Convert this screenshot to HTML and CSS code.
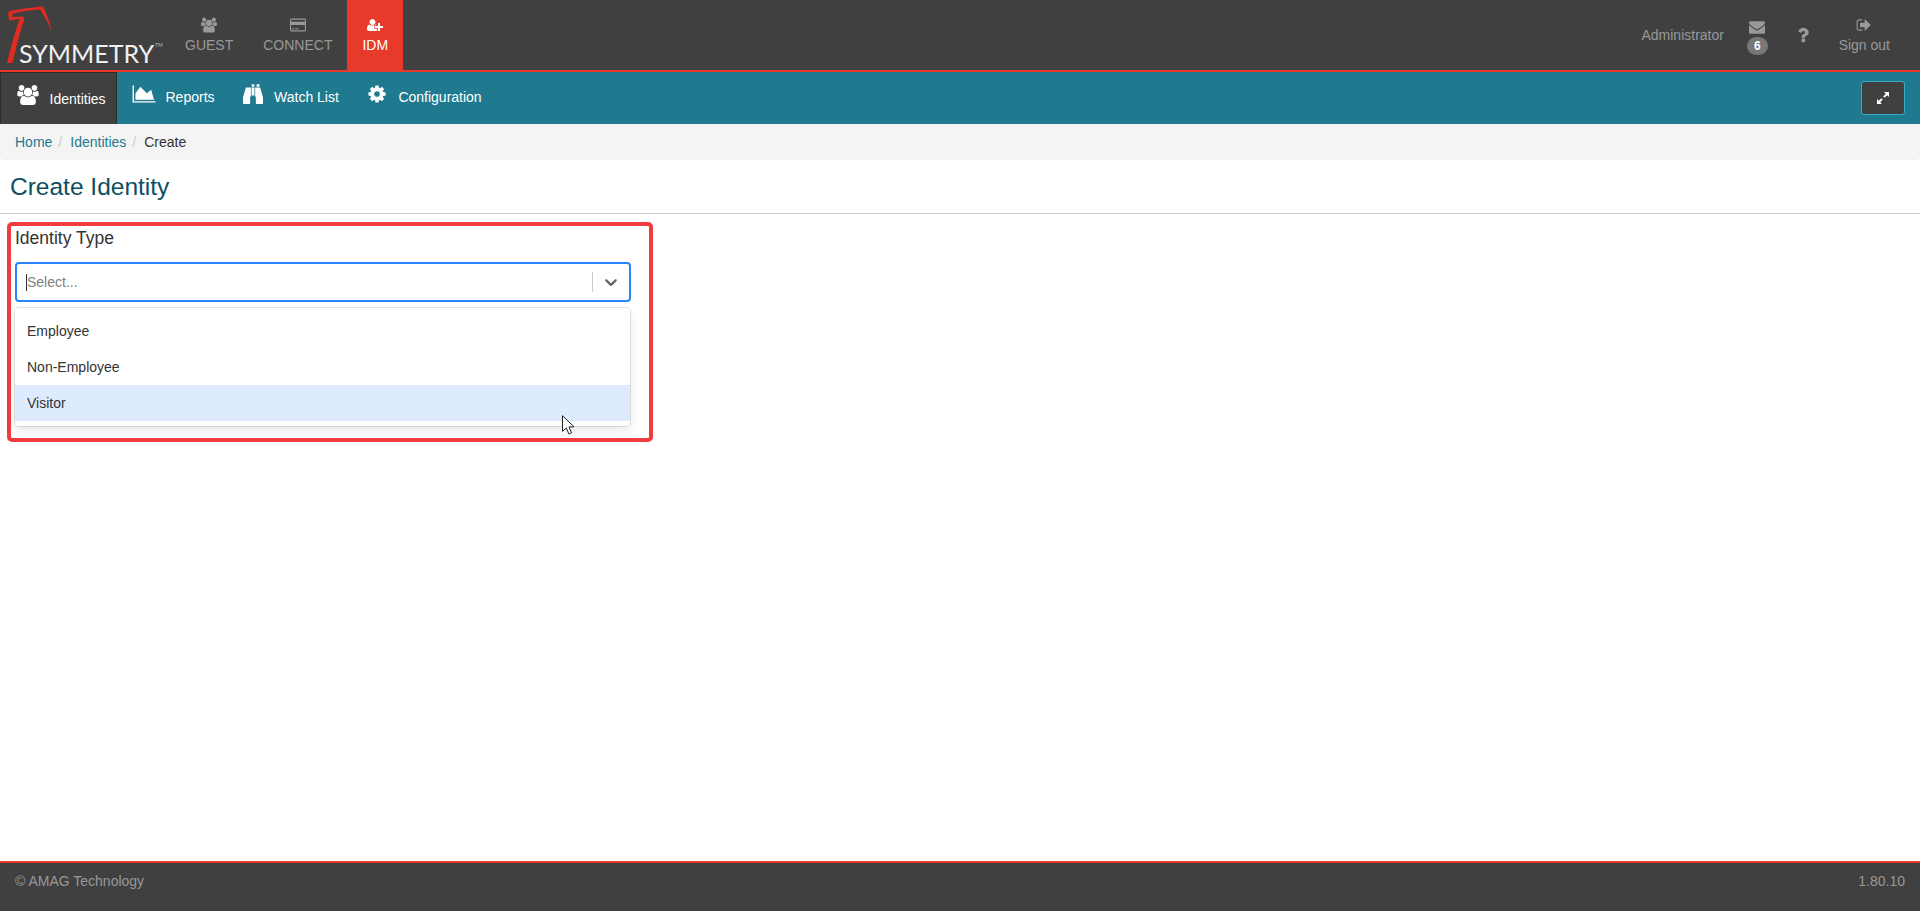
FILE: index.html
```html
<!DOCTYPE html>
<html lang="en">
<head>
    <meta charset="UTF-8">
    <meta name="viewport" content="width=device-width, initial-scale=1.0">
    <title>Create Identity</title>
    <link rel="stylesheet" href="styles.css">
</head>
<body>

<header class="top-bar">
    <a class="logo">
        <svg class="logo-bird" viewBox="0 0 60 70"><path fill="#e02b20" d="M8 14Q8 11 12 10.500Q28 7.500 43 6.500Q49 18 51.500 31Q46 18 40 9.500Q27 10 13 13.500L12 17L23.500 16.500L24 18L19 19L9.500 20.500Z"/><path fill="#e02b20" d="M19.500 18.500L24.500 18Q17 42 12.500 63L7 63Q12 42 19.500 18.500Z"/></svg>
        <span class="logo-text">SYMMETRY<sup>TM</sup></span>
    </a>
    <a class="app-tab">
        <svg class="tab-icon" viewBox="0 0 1920 1792"><path d="M593 896q-162 5-265 128h-134q-82 0-138-40.500t-56-118.500q0-353 124-353 6 0 43.500 21t97.500 42.500 119 21.500q67 0 133-23-5 37-5 66 0 139 81 256zm1071 637q0 120-73 189.500t-194 69.500h-874q-121 0-194-69.500t-73-189.500q0-53 3.500-103.500t14-109 26.500-108.500 43-97.500 62-81 85.500-53.500 111.500-20q10 0 43 21.500t73 48 107 48 135 21.500 135-21.500 107-48 73-48 43-21.500q61 0 111.500 20t85.500 53.500 62 81 43 97.500 26.500 108.500 14 109 3.500 103.500zm-1024-1277q0 106-75 181t-181 75-181-75-75-181 75-181 181-75 181 75 75 181zm704 384q0 159-112.500 271.500t-271.500 112.500-271.500-112.500-112.500-271.500 112.500-271.500 271.500-112.500 271.500 112.500 112.500 271.500zm576 225q0 78-56 118.500t-138 40.500h-134q-103-123-265-128 81-117 81-256 0-29-5-66 66 23 133 23 59 0 119-21.500t97.500-42.500 43.500-21q124 0 124 353zm-128-609q0 106-75 181t-181 75-181-75-75-181 75-181 181-75 181 75 75 181z"/></svg>
        GUEST
    </a>
    <a class="app-tab">
        <svg class="tab-icon" viewBox="0 0 1920 1792"><path d="M1760 128q66 0 113 47t47 113v1216q0 66-47 113t-113 47h-1600q-66 0-113-47t-47-113v-1216q0-66 47-113t113-47h1600zm-1600 128q-13 0-22.500 9.500t-9.500 22.500v224h1664v-224q0-13-9.500-22.500t-22.500-9.500h-1600zm1600 1280q13 0 22.500-9.500t9.500-22.500v-608h-1664v608q0 13 9.500 22.500t22.500 9.500h1600zm-1504-128v-128h256v128h-256zm384 0v-128h384v128h-384z"/></svg>
        CONNECT
    </a>
    <a class="app-tab app-tab-active">
        <svg class="tab-icon" viewBox="0 0 2048 1792"><path d="M704 896q-159 0-271.500-112.500t-112.500-271.500 112.500-271.500 271.500-112.500 271.500 112.500 112.500 271.500-112.500 271.500-271.500 112.500zm960 128h352q13 0 22.500 9.500t9.500 22.500v192q0 13-9.500 22.500t-22.500 9.500h-352v352q0 13-9.500 22.500t-22.500 9.500h-192q-13 0-22.500-9.500t-9.500-22.500v-352h-352q-13 0-22.500-9.500t-9.500-22.500v-192q0-13 9.500-22.500t22.500-9.500h352v-352q0-13 9.500-22.500t22.500-9.500h192q13 0 22.500 9.500t9.500 22.500v352zm-736 224q0 52 38 90t90 38h256v238q-68 50-171 50h-874q-121 0-194-69.500t-73-189.500q0-53 3.500-103.500t14-109 26.500-108.500 43-97.500 62-81 85.500-53.500 111.500-20q19 0 39 17 79 61 154.500 91.500t164.500 30.500 164.500-30.500 154.500-91.500q20-17 39-17 132 0 217 96h-223q-52 0-90 38t-38 90v192z"/></svg>
        IDM
    </a>

    <div class="user-area">
        <span class="user-name">Administrator</span>
        <a class="mail">
            <svg class="tab-icon" viewBox="0 0 1792 1792"><path d="M1792 710v794q0 66-47 113t-113 47h-1472q-66 0-113-47t-47-113v-794q44 49 101 87 362 246 497 345 57 42 92.500 65.500t94.500 48 110 24.500h2q51 0 110-24.500t94.500-48 92.500-65.500q170-123 498-345 57-39 100-87zm0-294q0 79-49 151t-122 123q-376 261-468 325-10 7-42.500 30.500t-54 38-52 32.500-57.500 27-50 9h-2q-23 0-50-9t-57.500-27-52-32.500-54-38-42.500-30.500q-91-64-262-182.500t-205-142.500q-62-42-117-115.500t-55-136.500q0-78 41.500-130t118.500-52h1472q65 0 112.500 47t47.500 113z"/></svg>
            <span class="badge">6</span>
        </a>
        <a class="help">
            <svg class="help-icon" viewBox="0 0 1792 1792"><path d="M1088 1256v240q0 16-12 28t-28 12h-240q-16 0-28-12t-12-28v-240q0-16 12-28t28-12h240q16 0 28 12t12 28zm316-600q0 54-15.500 101t-35 76.500-55 59.500-57.500 43.500-61 35.500q-41 23-68.500 65t-27.500 67q0 17-12 32.500t-28 15.500h-240q-15 0-25.500-18.500t-10.500-37.500v-45q0-83 65-156.500t143-108.500q59-27 84-56t25-76q0-42-46.500-74t-107.500-32q-65 0-108 29-35 25-107 115-13 16-31 16-12 0-25-8l-164-125q-13-10-15.500-25t5.500-28q160-266 464-266 80 0 161 31t146 83 106 127.500 41 158.500z"/></svg>
        </a>
        <a class="sign-out">
            <svg class="tab-icon" viewBox="0 0 1792 1792"><path d="M704 1440q0 4 1 20t.5 26.500-3 23.500-10 19.500-20.500 6.500h-320q-119 0-203.500-84.500t-84.500-203.500v-704q0-119 84.500-203.500t203.500-84.500h320q13 0 22.500 9.500t9.500 22.500q0 4 1 20t.5 26.500-3 23.500-10 19.500-20.500 6.500h-320q-66 0-113 47t-47 113v704q0 66 47 113t113 47h312l11.500 1 11.500 3 8 5.500 7 9 2 13.500zm928-544q0 26-19 45l-544 544q-19 19-45 19t-45-19-19-45v-288h-448q-26 0-45-19t-19-45v-384q0-26 19-45t45-19h448v-288q0-26 19-45t45-19 45 19l544 544q19 19 19 45z"/></svg>
            Sign out
        </a>
    </div>
</header>

<nav class="module-bar">
    <a class="module-link module-link-active">
        <svg class="module-icon" viewBox="0 0 1920 1792"><path d="M593 896q-162 5-265 128h-134q-82 0-138-40.500t-56-118.500q0-353 124-353 6 0 43.500 21t97.500 42.500 119 21.500q67 0 133-23-5 37-5 66 0 139 81 256zm1071 637q0 120-73 189.500t-194 69.500h-874q-121 0-194-69.500t-73-189.500q0-53 3.500-103.500t14-109 26.500-108.500 43-97.500 62-81 85.500-53.500 111.500-20q10 0 43 21.500t73 48 107 48 135 21.500 135-21.500 107-48 73-48 43-21.500q61 0 111.500 20t85.500 53.500 62 81 43 97.500 26.500 108.500 14 109 3.500 103.500zm-1024-1277q0 106-75 181t-181 75-181-75-75-181 75-181 181-75 181 75 75 181zm704 384q0 159-112.500 271.500t-271.500 112.500-271.500-112.500-112.500-271.500 112.500-271.500 271.500-112.500 271.500 112.500 112.500 271.500zm576 225q0 78-56 118.500t-138 40.500h-134q-103-123-265-128 81-117 81-256 0-29-5-66 66 23 133 23 59 0 119-21.500t97.500-42.500 43.500-21q124 0 124 353zm-128-609q0 106-75 181t-181 75-181-75-75-181 75-181 181-75 181 75 75 181z"/></svg>
        Identities
    </a>
    <a class="module-link">
        <svg class="module-icon" viewBox="0 0 2048 1792"><path d="M2048 1536v128h-2048v-1536h128v1408h1920zm-384-1024l256 896h-1664v-576l448-576 576 576z"/></svg>
        Reports
    </a>
    <a class="module-link">
        <svg class="module-icon" viewBox="0 0 1792 1792"><path d="M704 320v768q0 26-19 45t-45 19v576q0 26-19 45t-45 19h-512q-26 0-45-19t-19-45v-512l249-873q7-23 31-23h424zm320 0v704h-256v-704h256zm768 896v512q0 26-19 45t-45 19h-512q-26 0-45-19t-19-45v-576q-26 0-45-19t-19-45v-768h424q24 0 31 23zm-767-1184v224h-249v-224q0-9 9-9h231q9 0 9 9zm448 0v224h-250v-224q0-9 9-9h232q9 0 9 9z"/></svg>
        Watch List
    </a>
    <a class="module-link">
        <svg class="module-icon" viewBox="0 0 1792 1792"><path d="M1152 896q0-106-75-181t-181-75-181 75-75 181 75 181 181 75 181-75 75-181zm512-109v222q0 12-8 23t-20 13l-185 28q-19 54-39 91 35 50 107 138 10 12 10 25t-9 23q-27 37-99 108t-94 71q-12 0-26-9l-138-108q-44 23-91 38-16 136-29 186-7 28-36 28h-222q-14 0-24.500-8.500t-11.500-21.500l-28-184q-49-16-90-37l-141 107q-10 9-25 9-14 0-25-11-126-114-165-168-7-10-7-23 0-12 8-23 15-21 51-66.500t54-70.500q-27-50-41-99l-183-27q-13-2-21-12.500t-8-23.500v-222q0-12 8-23t19-13l186-28q14-46 39-92-40-57-107-138-10-12-10-24 0-10 9-23 26-36 98.500-107.500t94.500-71.500q13 0 26 10l138 107q44-23 91-38 16-136 29-186 7-28 36-28h222q14 0 24.500 8.500t11.500 21.500l28 184q49 16 90 37l142-107q9-9 24-9 13 0 25 10 129 119 165 170 7 8 7 22 0 12-8 23-15 21-51 66.500t-54 70.500q26 50 41 98l183 28q13 2 21 12.500t8 23.500z"/></svg>
        Configuration
    </a>
    <button class="expand-btn">
        <svg viewBox="0 0 14 14"><path fill="#fff" d="M8 1h5v5l-1.800-1.800-2.600 2.600-1.400-1.400 2.600-2.600zM1 13V8l1.800 1.800 2.600-2.600 1.400 1.400-2.600 2.600L6 13z"/></svg>
    </button>
</nav>

<div class="breadcrumb">
    <a>Home</a><span class="crumb-sep">/</span>
    <a>Identities</a><span class="crumb-sep">/</span>
    <span class="crumb-current">Create</span>
</div>

<main class="content">
    <h1 class="page-title">Create Identity</h1>

    <section class="type-box">
        <label class="type-label">Identity Type</label>
        <div class="select-control">
            <span class="caret"></span>
            <span class="select-placeholder">Select...</span>
            <span class="select-divider"></span>
            <svg class="select-chevron" viewBox="0 0 20 20"><path d="M4.516 7.548c0.436-0.446 1.043-0.481 1.576 0l3.908 3.747 3.908-3.747c0.533-0.481 1.141-0.446 1.574 0 0.436 0.445 0.408 1.197 0 1.615-0.406 0.418-4.695 4.502-4.695 4.502-0.217 0.223-0.502 0.335-0.787 0.335s-0.57-0.112-0.789-0.335c0 0-4.287-4.084-4.695-4.502s-0.436-1.17 0-1.615z"/></svg>
        </div>
        <ul class="select-menu">
            <li>Employee</li>
            <li>Non-Employee</li>
            <li class="option-hover">Visitor</li>
        </ul>
        <!-- Mauszeiger aus dem Screenshot -->
        <svg class="cursor" viewBox="0 0 13 20"><path fill="#fff" stroke="#222" stroke-width="1" d="M.5.700v15.600l3.800-3.400 2.500 6 2.700-1.100-2.500-5.900h5z"/></svg>
    </section>
</main>

<footer class="page-footer">
    <span>&copy; AMAG Technology</span>
    <span>1.80.10</span>
</footer>

</body>
</html>
```

FILE: styles.css
```css
* {
    box-sizing: border-box;
}
html, body {
    height: 100%;
}
body {
    margin: 0;
    display: flex;
    flex-direction: column;
    overflow: hidden;
    background-color: #fff;
    color: #333;
    font-family: "Liberation Sans", Arial, sans-serif;
    font-size: 14px;
}

/* Obere Leiste */
.top-bar {
    display: flex;
    height: 72px;
    flex: none;
    background-color: #404040;
    border-bottom: 2px solid #e83a2a;
    color: #999;
}
.logo {
    position: relative;
    width: 170px;
    flex: none;
}
.logo-bird {
    position: absolute;
    left: 0;
    top: 0;
    width: 60px;
    height: 70px;
}
.logo-text {
    position: absolute;
    left: 19px;
    top: 38px;
    color: #f0f0f0;
    font-family: "Lato", sans-serif;
    font-size: 25px;
    line-height: 30px;
    white-space: nowrap;
}
.logo-text sup {
    margin-left: 1px;
    font-size: 5px;
    vertical-align: 16px;
    line-height: 0;
    color: #bbb;
}
.app-tab {
    display: flex;
    flex-direction: column;
    align-items: center;
    padding: 17px 15px 0;
    line-height: 20px;
    color: #999;
}
.app-tab-active {
    background-color: #e83a2a;
    color: #fff;
}
.tab-icon {
    display: block;
    width: 16px;
    height: 16px;
    margin-bottom: 2px;
    fill: currentColor;
}
.user-area {
    display: flex;
    align-items: center;
    margin-left: auto;
    padding-right: 30px;
}
.user-name {
    margin-right: 23px;
}
.mail {
    display: flex;
    flex-direction: column;
    align-items: center;
    margin-top: 3px;
}
.badge {
    padding: 0 7px;
    border-radius: 10px;
    background-color: #777;
    color: #fff;
    font-size: 12px;
    font-weight: bold;
    line-height: 18px;
}
.help {
    margin: 0 26px 0 25px;
    color: #999;
}
.help-icon {
    display: block;
    width: 20px;
    height: 20px;
    fill: currentColor;
}
.sign-out {
    display: flex;
    flex-direction: column;
    align-items: center;
    padding-top: 2px;
    line-height: 20px;
}

/* Modul-Navigation */
.module-bar {
    display: flex;
    align-items: center;
    height: 52px;
    flex: none;
    background-color: #1f7a8f;
    padding-right: 15px;
}
.module-link {
    display: flex;
    align-items: center;
    height: 100%;
    padding: 0 13px 2px;
    color: #fff;
}
.module-link-active {
    width: 117px;
    margin-right: 2px;
    padding: 0 0 0 15px;
    background-color: #404040;
    border: 1px solid #2b2b2b;
    border-bottom: none;
}
.module-icon {
    width: 24px;
    height: 20px;
    margin: -7px 9.500px 0 0;
    fill: #fff;
}
.expand-btn {
    margin-left: auto;
    width: 44px;
    height: 34px;
    padding: 0;
    background-color: #404040;
    border: 1px solid #35adc6;
    border-radius: 3px;
}
.expand-btn svg {
    display: block;
    width: 14px;
    height: 14px;
    margin: 0 auto;
}

/* Brotkrumen */
.breadcrumb {
    display: flex;
    align-items: center;
    height: 36px;
    flex: none;
    padding-left: 15px;
    background-color: #f4f4f4;
    border-radius: 0 0 4px 4px;
}
.breadcrumb a {
    color: #1f7a8f;
}
.crumb-sep {
    padding: 0 8px 0 6px;
    color: #ccc;
}
.crumb-current {
    color: #333;
}

/* Inhalt */
.content {
    flex: 1;
}
.page-title {
    height: 54px;
    margin: 0 0 8px;
    padding: 13px 0 0 10px;
    border-bottom: 1px solid #ccc;
    color: #0d4f5f;
    font-size: 24.500px;
    font-weight: normal;
    line-height: 28px;
}
.type-box {
    position: relative;
    width: 646px;
    height: 220px;
    margin-left: 7px;
    padding: 4px 4px 0 4px;
    border: 4px solid #f03c3c;
    border-radius: 5px;
}
.type-label {
    display: block;
    height: 18px;
    margin-bottom: 14px;
    font-size: 17.500px;
    line-height: 16px;
}
.select-control {
    display: flex;
    align-items: center;
    width: 616px;
    height: 40px;
    padding: 0 8px 0 9px;
    border: 2px solid #2684ff;
    border-radius: 4px;
}
.caret {
    width: 1px;
    height: 17px;
    background-color: #333;
}
.select-placeholder {
    flex: 1;
    color: #808080;
}
.select-divider {
    width: 1px;
    height: 20px;
    margin-right: 8px;
    background-color: #ccc;
}
.select-chevron {
    width: 20px;
    height: 20px;
    fill: #666;
}
.select-menu {
    width: 615px;
    height: 118px;
    margin: 6px 0 0;
    padding: 5px 0 0;
    list-style: none;
    border-radius: 4px;
    box-shadow: 0 0 0 1px rgba(0, 0, 0, .1), 0 4px 11px rgba(0, 0, 0, .1);
}
.select-menu li {
    height: 36px;
    padding: 0 12px;
    line-height: 36px;
}
.option-hover {
    background-color: #deebff;
}
.cursor {
    position: absolute;
    left: 551px;
    top: 189px;
    width: 13px;
    height: 20px;
}

/* Fusszeile */
.page-footer {
    display: flex;
    justify-content: space-between;
    height: 50px;
    flex: none;
    padding: 10px 15px 0;
    background-color: #404040;
    border-top: 2px solid #e83a2a;
    color: #999;
    line-height: 16px;
}
```
